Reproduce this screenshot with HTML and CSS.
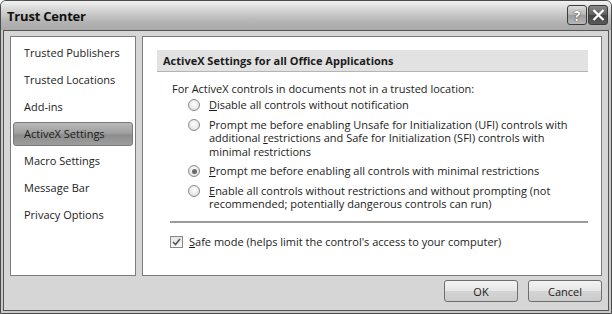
FILE: index.html
```html
<!DOCTYPE html>
<html lang="en">
<head>
    <meta charset="UTF-8">
    <title>Trust Center</title>
    <link rel="stylesheet" href="styles.css">
</head>
<body>
    <div class="window">
        <div class="titlebar">
            <span class="title">Trust Center</span>
            <div class="caption-buttons">
                <span class="cap-btn help">?</span>
                <span class="cap-btn close">
                    <svg width="13" height="12" viewBox="0 0 13 12"><path d="M1.5 1 L11.5 11 M11.5 1 L1.5 11" stroke="#fff" stroke-width="2.2" fill="none"/></svg>
                </span>
            </div>
        </div>

        <div class="client">
            <div class="panels">
                <!-- category list -->
                <ul class="nav">
                    <li>Trusted Publishers</li>
                    <li>Trusted Locations</li>
                    <li>Add-ins</li>
                    <li class="active">ActiveX Settings</li>
                    <li>Macro Settings</li>
                    <li>Message Bar</li>
                    <li>Privacy Options</li>
                </ul>

                <!-- settings page -->
                <div class="page">
                    <h2 class="page-heading">ActiveX Settings for all Office Applications</h2>
                    <p class="intro">For ActiveX controls in documents not in a trusted location:</p>
                    <div class="options">
                        <label class="option">
                            <span class="radio"></span>
                            <span><u>D</u>isable all controls without notification</span>
                        </label>
                        <label class="option">
                            <span class="radio"></span>
                            <span>Prompt me before enabling Unsafe for Initialization (UFI) controls with<br>additional <u>r</u>estrictions and Safe for Initialization (SFI) controls with<br>minimal restrictions</span>
                        </label>
                        <label class="option">
                            <span class="radio checked"></span>
                            <span><u>P</u>rompt me before enabling all controls with minimal restrictions</span>
                        </label>
                        <label class="option">
                            <span class="radio"></span>
                            <span><u>E</u>nable all controls without restrictions and without prompting (not<br>recommended; potentially dangerous controls can run)</span>
                        </label>
                    </div>
                    <hr class="separator">
                    <label class="check-row">
                        <span class="checkbox">
                            <svg width="9" height="8" viewBox="0 0 9 8"><path d="M1 4 L3.5 6.5 L8 1" stroke="#555" stroke-width="1.6" fill="none"/></svg>
                        </span>
                        <span><u>S</u>afe mode (helps limit the control's access to your computer)</span>
                    </label>
                </div>
            </div>

            <div class="buttons">
                <button class="btn">OK</button>
                <button class="btn">Cancel</button>
            </div>
        </div>
    </div>
</body>
</html>
```
FILE: styles.css
```css
* {
    margin: 0;
    padding: 0;
    box-sizing: border-box;
}

body {
    font-family: 'Open Sans', 'Noto Sans', sans-serif;
    font-size: 11px;
    color: #1b1b1b;
    background: #fff;
}

.window {
    width: 612px;
    height: 314px;
    border: 1px solid #4a4a4a;
    border-radius: 6px 6px 0 0;
    background: #c9c9c9;
    padding: 0 2px 2px 2px;
    display: flex;
    flex-direction: column;
}

.titlebar {
    height: 29px;
    display: flex;
    align-items: center;
    justify-content: space-between;
    padding: 0 3px 0 6px;
    background: linear-gradient(#f2f2f2, #d6d6d6 30%, #b4b4b4 70%, #a9a9a9);
    margin: 0 -2px;
    border-radius: 5px 5px 0 0;
}

.title {
    font-weight: bold;
    font-size: 13px;
    color: #111;
    letter-spacing: -0.2px;
}

.caption-buttons {
    display: flex;
    gap: 1px;
    align-self: flex-start;
    margin-top: 4px;
}

.cap-btn {
    width: 20px;
    height: 20px;
    border: 1px solid #3c3c3c;
    border-radius: 3px;
    display: flex;
    align-items: center;
    justify-content: center;
}

.help {
    background: linear-gradient(#dcdcdc, #b2b2b2 50%, #9c9c9c 51%, #b8b8b8);
    font-weight: bold;
    font-size: 14px;
    color: #fff;
    text-shadow: 0 0 1px #333, 0 0 1px #333;
}

.close {
    background: linear-gradient(#8a8a8a, #5e5e5e 50%, #444 51%, #5a5a5a);
}

.client {
    flex: 1;
    border: 1px solid #555;
    background: #d6d6d6;
    padding: 5px 6px 6px 6px;
    display: flex;
    flex-direction: column;
}

.panels {
    display: flex;
    gap: 6px;
    height: 240px;
}

.nav {
    list-style: none;
    width: 126px;
    background: #fff;
    border: 1px solid #7d7d7d;
    padding: 2px 2px;
}

.nav li {
    height: 27px;
    line-height: 25px;
    padding-left: 10px;
    font-size: 11px;
    border: 1px solid transparent;
    border-radius: 3px;
}

.nav li.active {
    height: 24px;
    line-height: 22px;
    margin: 2px 0 1px;
    background: linear-gradient(#b8b8b8, #a0a0a0 45%, #8c8c8c 55%, #9e9e9e);
    border-color: #7a7a7a;
}

.page {
    flex: 1;
    background: #fff;
    border: 1px solid #7d7d7d;
    padding: 13px 13px 0 14px;
}

.page-heading {
    height: 22px;
    line-height: 21px;
    padding-left: 6px;
    font-size: 11px;
    font-weight: bold;
    background: #e2e2e2;
    border-bottom: 1px solid #b4b4b4;
}

.intro {
    margin: 10px 0 0 15px;
    line-height: 14px;
}

.options {
    margin-left: 31px;
    margin-top: 2px;
    display: flex;
    flex-direction: column;
    gap: 6px;
}

.option {
    display: flex;
    gap: 9px;
    line-height: 13.5px;
}

.radio {
    flex: none;
    width: 12px;
    height: 12px;
    margin-top: 1px;
    border-radius: 50%;
    border: 1px solid #8a8a8a;
    background: radial-gradient(circle at 50% 40%, #fff, #e8e8e8 60%, #cfcfcf);
    display: flex;
    align-items: center;
    justify-content: center;
}

.radio.checked::after {
    content: "";
    width: 5px;
    height: 5px;
    border-radius: 50%;
    background: #6a6a6a;
}

.separator {
    border: none;
    border-top: 2px solid #9b9b9b;
    margin: 10px 0 0 13px;
}

.check-row {
    display: flex;
    align-items: center;
    gap: 6px;
    margin: 12px 0 0 13px;
    line-height: 14px;
}

.checkbox {
    width: 13px;
    height: 12px;
    border: 1px solid #888;
    background: linear-gradient(#e4e4e4, #fafafa);
    display: flex;
    align-items: center;
    justify-content: center;
}

.buttons {
    display: flex;
    justify-content: flex-end;
    gap: 10px;
    margin-top: 4px;
}

.btn {
    width: 74px;
    height: 22px;
    font-family: inherit;
    font-size: 11px;
    color: #1b1b1b;
    border: 1px solid #6e6e6e;
    border-radius: 3px;
    background: linear-gradient(#f4f4f4, #e6e6e6 48%, #d4d4d4 52%, #cbcbcb);
}
```
